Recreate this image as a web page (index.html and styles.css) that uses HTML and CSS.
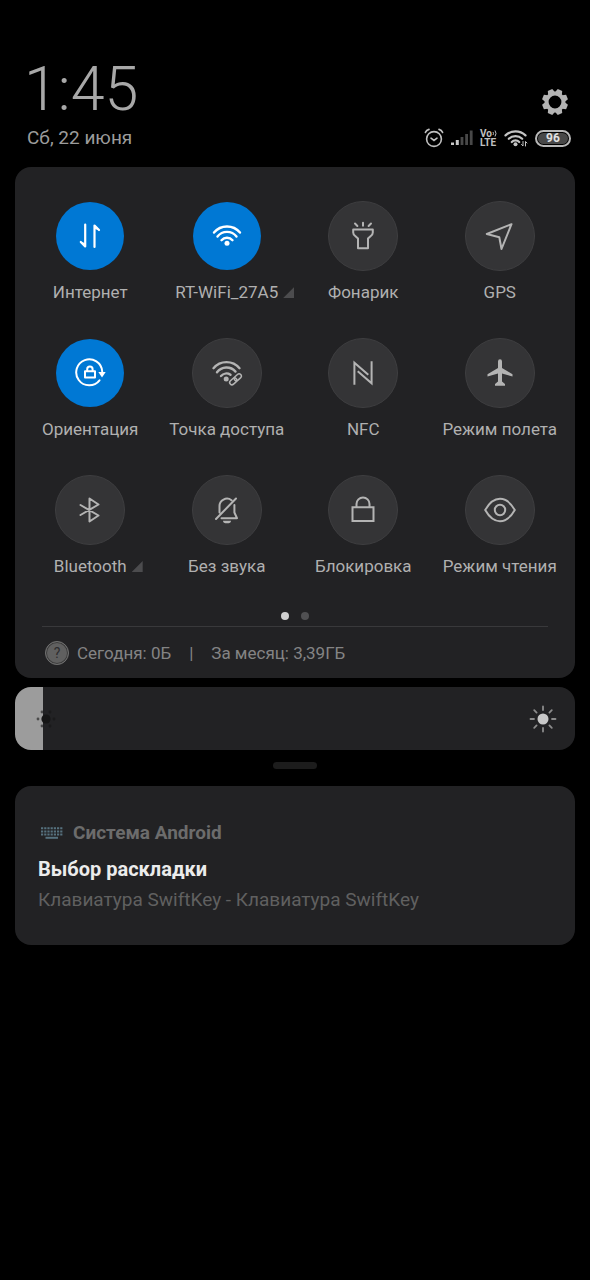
FILE: index.html
```html
<!DOCTYPE html>
<html lang="ru">
<head>
<meta charset="utf-8">
<meta name="viewport" content="width=device-width, initial-scale=1">
<title>Шторка уведомлений</title>
<link rel="stylesheet" href="styles.css">
</head>
<body>
<main class="shade">
  <header class="header">
    <div class="header-left">
      <time class="clock">1:45</time>
      <div class="date">Сб, 22 июня</div>
    </div>
    <div class="header-right">
      <button class="settings" type="button" aria-label="Настройки">
        <svg width="28" height="28" viewBox="-14 -14 28 28">
          <circle r="8.4" fill="none" stroke="#b4b4b4" stroke-width="4"/>
          <g fill="#b4b4b4">
            <path id="tooth" d="M-3.6-9.2-2.400-13H2.400L3.600-9.200Z" transform="rotate(22.5)"/>
            <use href="#tooth" transform="rotate(45)"/><use href="#tooth" transform="rotate(90)"/>
            <use href="#tooth" transform="rotate(135)"/><use href="#tooth" transform="rotate(180)"/>
            <use href="#tooth" transform="rotate(225)"/><use href="#tooth" transform="rotate(270)"/>
            <use href="#tooth" transform="rotate(315)"/>
          </g>
        </svg>
      </button>
      <div class="status">
        <svg width="20" height="20" viewBox="0 0 20 20" fill="none" stroke="#c0c0c0" stroke-width="1.6" stroke-linecap="round">
          <circle cx="10" cy="11" r="7.4"/><path d="M7 10.2 10 12.4 13 10.2M1.4 4.4Q2.4 2 5 1.4M18.6 4.4Q17.6 2 15 1.4"/>
        </svg>
        <svg class="signal" width="22" height="16" viewBox="0 0 22 16">
          <path fill="#c8c8c8" d="M0 12.500h3v2.500H0zM4.800 10h3v5h-3z"/>
          <path fill="#484848" d="M9.600 7h2.800v8H9.600zM14.200 4h2.800v11h-2.800zM18.800 .5h2.800v14.500h-2.800z"/>
        </svg>
        <div class="volte"><span>Vo<svg width="5" height="7" viewBox="0 0 5 7" fill="none" stroke="#c0c0c0"><path d="M1 2Q2 3.500 1 5M3 .5Q5 3.500 3 6.500"/></svg></span><span>LTE</span></div>
        <svg width="24" height="18" viewBox="0 0 24 18" fill="none" stroke="#c4c4c4" stroke-width="2.200" stroke-linecap="round">
          <path d="M1.500 6.400A14.500 14.500 0 0 1 21.500 6.400M4.800 9.800A9.500 9.500 0 0 1 18.200 9.800M7.800 13A5 5 0 0 1 15.200 13"/>
          <circle cx="11.500" cy="15.200" r="2" fill="#c4c4c4" stroke="none"/>
          <path stroke-width="1" d="M19 12.500V17L17.500 15.500M21.500 17V12.500L23 14"/>
        </svg>
        <div class="battery"><span>96</span></div>
      </div>
    </div>
  </header>

  <section class="panel" aria-label="Быстрые настройки">
    <div class="tiles">
      <button class="tile on" type="button" aria-pressed="true">
        <span class="disc"><svg class="icon" viewBox="0 0 32 32"><path stroke-width="2.200" d="M11.200 4.500V26.500L6.800 22M20.500 27V5.500L25 10"/><path class="solid" d="M11 27 5.800 21.500 11 23ZM20.700 5 26 10.500 20.700 9Z"/></svg></span>
        <span class="label">Интернет</span>
      </button>
      <button class="tile on" type="button" aria-pressed="true">
        <span class="disc"><svg class="icon" viewBox="0 0 32 32"><path stroke-width="2.400" d="M3 12.600A17 17 0 0 1 29 12.600M6.500 16.500A12 12 0 0 1 25.500 16.500M10.500 20.200A7.300 7.300 0 0 1 21.500 20.200"/><circle class="solid" cx="16" cy="23.300" r="2.500"/></svg></span>
        <span class="label">RT-WiFi_27A5<i class="more"></i></span>
      </button>
      <button class="tile" type="button" aria-pressed="false">
        <span class="disc"><svg class="icon" viewBox="0 0 32 32"><path d="M6.200 9.500H25.800V12.500Q25.800 14.500 23.800 16L21 18.600V28.300H11V18.600L8.200 16Q6.200 14.500 6.200 12.500ZM16 2.700V5.800M8 3.500 10.400 6M24 3.500 21.600 6"/></svg></span>
        <span class="label">Фонарик</span>
      </button>
      <button class="tile" type="button" aria-pressed="false">
        <span class="disc"><svg class="icon" viewBox="0 0 32 32"><path d="M27.500 4.200 2.800 14 15.300 17.200 17.500 29Z"/></svg></span>
        <span class="label">GPS</span>
      </button>
      <button class="tile on" type="button" aria-pressed="true">
        <span class="disc"><svg class="icon" viewBox="0 0 32 32"><path d="M25.500 23.300A13 13 0 1 1 28.200 14.500"/><path class="solid" d="M24.300 15H31.700L28 20.500Z"/><path d="M11 14.300H21V20.500H11ZM13.200 14V12.300A2.700 2.700 0 0 1 18.600 12.300V14"/></svg></span>
        <span class="label">Ориентация</span>
      </button>
      <button class="tile" type="button" aria-pressed="false">
        <span class="disc"><svg class="icon" viewBox="0 0 32 32"><path stroke-width="2.400" d="M2.500 11.200A17 17 0 0 1 28.500 11.200M6 15.200A12 12 0 0 1 24.500 14.600M10 19A7.300 7.300 0 0 1 19.500 17.800"/><circle class="solid" cx="15.200" cy="22" r="2.500"/><g transform="rotate(-42 24.500 22.300)" stroke-width="1.500"><rect x="17.500" y="20" width="8" height="4.600" rx="2.300"/><rect x="23.500" y="20" width="8" height="4.600" rx="2.300"/></g></svg></span>
        <span class="label">Точка доступа</span>
      </button>
      <button class="tile" type="button" aria-pressed="false">
        <span class="disc"><svg class="icon" viewBox="0 0 32 32"><path class="sharp" d="M7.400 27.800V5.800L21.300 17.800M24.600 4.200V26.200L10.700 14.200"/></svg></span>
        <span class="label">NFC</span>
      </button>
      <button class="tile" type="button" aria-pressed="false">
        <span class="disc"><svg class="icon" viewBox="0 0 32 32"><path class="solid" d="M14 4.500Q14 2.200 16 2.200T18 4.500V11L28.500 17.200V19.600L18 16.500V24.500L21 27V28.800H11V27L14 24.500V16.500L3.500 19.600V17.200L14 11Z"/></svg></span>
        <span class="label">Режим полета</span>
      </button>
      <button class="tile" type="button" aria-pressed="false">
        <span class="disc"><svg class="icon" viewBox="0 0 32 32"><path d="M6.500 11 24.500 21.500 15.500 27.500V4.500L24.500 10.500 6.500 21"/></svg></span>
        <span class="label">Bluetooth<i class="more"></i></span>
      </button>
      <button class="tile" type="button" aria-pressed="false">
        <span class="disc"><svg class="icon" viewBox="0 0 32 32"><path d="M25 4.500 5 25M8.500 18.500V12.500A7.500 7.500 0 0 1 20.500 6.200M23.400 11V18.500L26 24.200H10.500"/><path class="solid" d="M12 26.700H20A4 2.600 0 0 1 12 26.700Z"/></svg></span>
        <span class="label">Без звука</span>
      </button>
      <button class="tile" type="button" aria-pressed="false">
        <span class="disc"><svg class="icon" viewBox="0 0 32 32"><path class="sharp" d="M5.500 13.300H26.500V27H5.500ZM9.500 13V10A6.500 6.500 0 0 1 22.500 10V13"/></svg></span>
        <span class="label">Блокировка</span>
      </button>
      <button class="tile" type="button" aria-pressed="false">
        <span class="disc"><svg class="icon" viewBox="0 0 32 32"><path d="M1.200 16Q7.500 4.800 16 4.800T30.800 16Q24.500 27.200 16 27.200T1.200 16Z"/><circle cx="16" cy="16" r="5.200"/></svg></span>
        <span class="label">Режим чтения</span>
      </button>
    </div>
    <div class="pages"><span class="dot current"></span><span class="dot"></span></div>
    <footer class="usage">
      <span class="help">?</span>
      <span>Сегодня: 0Б</span>
      <span class="bar">|</span>
      <span>За месяц: 3,39ГБ</span>
    </footer>
  </section>

  <div class="brightness">
    <input class="range" type="range" min="0" max="100" value="5" aria-label="Яркость">
    <svg class="sun-low" width="20" height="20" viewBox="-10 -10 20 20" fill="#161616">
      <circle r="4.600"/><g opacity=".6"><circle cx="-8" r="1.400"/><circle cx="8" r="1.400"/><circle cx="-4" cy="-7" r="1.400"/><circle cx="4" cy="-7" r="1.400"/><circle cx="-4" cy="7" r="1.400"/><circle cx="4" cy="7" r="1.400"/></g>
    </svg>
    <svg class="sun-high" width="28" height="28" viewBox="-14 -14 28 28">
      <circle r="5.500" fill="#c8c8c8"/>
      <path stroke="#8c8c8c" stroke-width="1.800" stroke-linecap="round" d="M0-12.500V-9M0 12.500V9M-12.500 0H-9M12.500 0H9M-8.800-8.800-6.400-6.400M8.800 8.800 6.400 6.400M-8.800 8.800-6.400 6.400M8.800-8.800 6.400-6.400"/>
    </svg>
  </div>

  <div class="handle"></div>

  <article class="notice">
    <div class="app">
      <svg width="22" height="12" viewBox="0 0 22 12" fill="none" stroke="#56717e" stroke-width="2">
        <path stroke-dasharray="2.200 1" d="M0 1.200H22M0 4.400H22M0 7.600H22"/><path d="M4.500 10.800H17"/>
      </svg>
      <span>Система Android</span>
    </div>
    <h2 class="title">Выбор раскладки</h2>
    <p class="text">Клавиатура SwiftKey - Клавиатура SwiftKey</p>
  </article>
</main>
</body>
</html>
```

FILE: styles.css
```css
* {
  box-sizing: border-box;
}

body {
  margin: 0;
  min-height: 100vh;
  background: #000;
  color: #b0b0b0;
  font-family: Roboto, "Noto Sans", sans-serif;
  font-size: 17px;
}

button {
  margin: 0;
  padding: 0;
  border: 0;
  background: none;
  color: inherit;
  font: inherit;
}

svg {
  display: block;
  flex: none;
}

.shade {
  padding: 58px 15px 24px;
}

.header {
  display: flex;
  justify-content: space-between;
  align-items: flex-end;
  padding: 0 3px 17px 9px;
}

.clock {
  display: block;
  color: #a8a8a8;
  font-size: 61px;
  font-weight: 300;
  line-height: 62px;
}

.date {
  margin-top: 6px;
  padding-left: 3px;
  color: #9c9c9c;
  font-size: 19px;
  line-height: 24px;
}

.header-right {
  display: flex;
  flex-direction: column;
  align-items: flex-end;
  gap: 10px;
}

.settings {
  margin-right: 3px;
}

.status {
  display: flex;
  align-items: center;
  gap: 7px;
  height: 24px;
  padding-right: 1px;
}

.volte {
  display: flex;
  flex-direction: column;
  font-size: 10px;
  font-weight: 700;
  line-height: 9px;
  color: #c0c0c0;
}

.volte span {
  display: flex;
  align-items: center;
}

.battery {
  width: 36px;
  height: 17px;
  padding: 1px;
  border: 2px solid #b8b8b8;
  border-radius: 9px;
}

.battery span {
  display: block;
  border-radius: 6px;
  background: #484848;
  color: #e0e0e0;
  font-size: 12px;
  font-weight: 700;
  line-height: 11px;
  text-align: center;
}

.panel,
.notice {
  border-radius: 16px;
  background: #222224;
}

.panel {
  padding-top: 34px;
}

.tiles {
  display: grid;
  grid-template-columns: repeat(4, 1fr);
  row-gap: 34px;
  padding: 0 7px;
}

.tile {
  display: flex;
  flex-direction: column;
  align-items: center;
  gap: 9px;
}

.disc {
  display: flex;
  align-items: center;
  justify-content: center;
  width: 70px;
  height: 70px;
  border: 1px solid #3e3e40;
  border-radius: 50%;
  background: #343436;
  color: #b4b4b4;
}

.on .disc {
  border-color: transparent;
  background: #0078d4;
  background-clip: padding-box;
  color: #fff;
}

.icon {
  width: 32px;
  height: 32px;
  fill: none;
  stroke: currentColor;
  stroke-width: 2;
  stroke-linecap: round;
  stroke-linejoin: round;
}

.icon .solid {
  fill: currentColor;
  stroke: none;
}

.icon .sharp {
  stroke-linecap: butt;
  stroke-linejoin: miter;
}

.label {
  position: relative;
  line-height: 24px;
  white-space: nowrap;
}

.more {
  position: absolute;
  left: 100%;
  bottom: 6px;
  width: 11px;
  height: 11px;
  margin-left: 5px;
  background: #4c4c4e;
  clip-path: polygon(100% 0, 100% 100%, 0 100%);
}

.pages {
  display: flex;
  justify-content: center;
  gap: 12px;
  padding: 34px 0 6px;
}

.dot {
  width: 8px;
  height: 8px;
  border-radius: 50%;
  background: #505052;
}

.dot.current {
  background: #d0d0d0;
}

.usage {
  display: flex;
  align-items: center;
  gap: 18px;
  height: 52px;
  margin: 0 27px;
  border-top: 1px solid #39393b;
  color: #848484;
}

.help {
  width: 24px;
  height: 24px;
  margin: 0 -10px 0 3px;
  border: 1px solid #707070;
  border-radius: 50%;
  background: #606060;
  box-shadow: inset 0 0 0 1px #3c3c3c;
  color: #2c2c2e;
  font-size: 14px;
  line-height: 22px;
  text-align: center;
}

.brightness {
  position: relative;
  margin-top: 9px;
}

.range {
  display: block;
  appearance: none;
  width: 100%;
  height: 63px;
  margin: 0;
  border-radius: 16px;
  background: linear-gradient(to right, #9c9c9c 5%, #222224 5%);
}

.range::-webkit-slider-thumb {
  appearance: none;
  width: 2px;
  height: 63px;
  background: transparent;
}

.sun-low,
.sun-high {
  position: absolute;
  top: 50%;
  transform: translateY(-50%);
  pointer-events: none;
}

.sun-low {
  left: 21px;
}

.sun-high {
  right: 18px;
}

.handle {
  width: 44px;
  height: 7px;
  margin: 12px auto 17px;
  border-radius: 4px;
  background: #1c1c1c;
}

.notice {
  padding: 34px 23px 31px;
}

.app {
  display: flex;
  align-items: center;
  gap: 10px;
  padding-left: 3px;
  color: #6c6c6c;
  font-size: 19px;
  font-weight: 700;
  line-height: 26px;
}

.title {
  margin: 10px 0 4px;
  color: #ececec;
  font-size: 20px;
  font-weight: 700;
  line-height: 26px;
}

.text {
  margin: 0;
  color: #606060;
  font-size: 19px;
  line-height: 28px;
}
```
